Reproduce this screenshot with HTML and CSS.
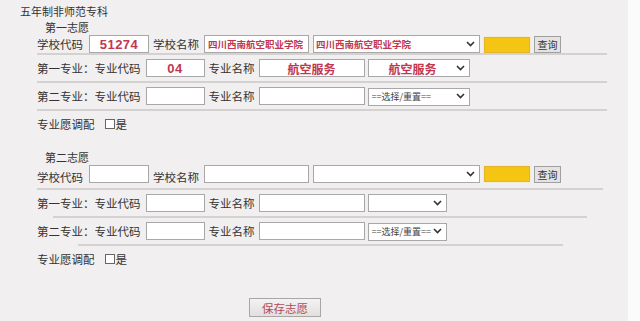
FILE: index.html
```html
<!DOCTYPE html>
<html lang="zh-CN">
<head>
  <meta charset="UTF-8" />
  <meta name="viewport" content="width=device-width, initial-scale=1.0"/>
  <title>志愿填报</title>
  <link rel="stylesheet" href="styles.css">
</head>
<body>
  <div class="page">
    <div class="panel">
      <div class="kind">五年制非师范专科</div>

      <!-- 第一志愿 -->
      <section class="choice">
        <div class="choice-title">第一志愿</div>
        <div class="row row-school">
          <span class="lbl">学校代码</span>
          <input class="txt code num" type="text" value="51274" />
          <span class="lbl">学校名称</span>
          <input class="txt name small" type="text" value="四川西南航空职业学院" />
          <div class="sel sel-school">
            <select class="small"><option>四川西南航空职业学院</option></select>
            <svg class="chev" width="9" height="6" viewBox="0 0 9 6"><path d="M1 1l3.5 3.5L8 1" fill="none" stroke="#333" stroke-width="1.6"/></svg>
          </div>
          <span class="mark"></span>
          <button class="query" type="button">查询</button>
        </div>
        <div class="rule"></div>
        <div class="row">
          <span class="lbl lbl-major">第一专业：专业代码</span>
          <input class="txt mcode num" type="text" value="04" />
          <span class="lbl">专业名称</span>
          <input class="txt mname big" type="text" value="航空服务" />
          <div class="sel sel-major">
            <select class="big"><option>航空服务</option></select>
            <svg class="chev" width="9" height="6" viewBox="0 0 9 6"><path d="M1 1l3.5 3.5L8 1" fill="none" stroke="#333" stroke-width="1.6"/></svg>
          </div>
        </div>
        <div class="rule"></div>
        <div class="row">
          <span class="lbl lbl-major">第二专业：专业代码</span>
          <input class="txt mcode" type="text" />
          <span class="lbl">专业名称</span>
          <input class="txt mname" type="text" />
          <div class="sel sel-major">
            <select class="pick"><option>==选择/重置==</option></select>
            <svg class="chev" width="9" height="6" viewBox="0 0 9 6"><path d="M1 1l3.5 3.5L8 1" fill="none" stroke="#333" stroke-width="1.6"/></svg>
          </div>
        </div>
        <div class="rule"></div>
        <div class="row row-adjust">
          <span class="lbl">专业愿调配</span>
          <input class="check" type="checkbox" />
          <span>是</span>
        </div>
      </section>

      <!-- 第二志愿 -->
      <section class="choice choice-second">
        <div class="choice-title">第二志愿</div>
        <div class="row row-school">
          <span class="lbl">学校代码</span>
          <input class="txt code" type="text" />
          <span class="lbl">学校名称</span>
          <input class="txt name" type="text" />
          <div class="sel sel-school">
            <select><option></option></select>
            <svg class="chev" width="9" height="6" viewBox="0 0 9 6"><path d="M1 1l3.5 3.5L8 1" fill="none" stroke="#333" stroke-width="1.6"/></svg>
          </div>
          <span class="mark"></span>
          <button class="query" type="button">查询</button>
        </div>
        <div class="rule rule-a"></div>
        <div class="row">
          <span class="lbl lbl-major">第一专业：专业代码</span>
          <input class="txt mcode" type="text" />
          <span class="lbl">专业名称</span>
          <input class="txt mname" type="text" />
          <div class="sel sel-short">
            <select><option></option></select>
            <svg class="chev" width="9" height="6" viewBox="0 0 9 6"><path d="M1 1l3.5 3.5L8 1" fill="none" stroke="#333" stroke-width="1.6"/></svg>
          </div>
        </div>
        <div class="rule rule-b"></div>
        <div class="row">
          <span class="lbl lbl-major">第二专业：专业代码</span>
          <input class="txt mcode" type="text" />
          <span class="lbl">专业名称</span>
          <input class="txt mname" type="text" />
          <div class="sel sel-short">
            <select class="pick"><option>==选择/重置==</option></select>
            <svg class="chev" width="9" height="6" viewBox="0 0 9 6"><path d="M1 1l3.5 3.5L8 1" fill="none" stroke="#333" stroke-width="1.6"/></svg>
          </div>
        </div>
        <div class="rule rule-c"></div>
        <div class="row row-adjust">
          <span class="lbl">专业愿调配</span>
          <input class="check" type="checkbox" />
          <span>是</span>
        </div>
      </section>

      <div class="actions">
        <button class="save" type="button">保存志愿</button>
      </div>
    </div>
  </div>
</body>
</html>
```

FILE: styles.css
```css
body {
  margin: 0;
  background: #fbfbfb;
  font-family: "Noto Sans CJK SC", "Noto Sans", sans-serif;
  font-size: 11.5px;
  color: #333;
}

.page {
  display: flex;
  height: 321px;
}

.panel {
  width: 628px;
  box-sizing: border-box;
  padding: 4px 0 0 20px;
  background: #f1efef;
}

.kind {
  font-size: 11px;
  line-height: 14px;
}

.choice-title {
  margin: 1px 0 0 25px;
  font-size: 11px;
  line-height: 16px;
}

.choice-second {
  margin-top: 13px;
}

.choice-second .choice-title {
  margin-top: 0;
  line-height: 15px;
}

.row {
  display: flex;
  align-items: center;
  height: 26px;
  margin-left: 17px;
  white-space: nowrap;
}

.row-school {
  height: 18px;
}

.choice-second .row-school {
  height: 23px;
  align-items: flex-start;
}

.choice-second .row-school .lbl {
  align-self: center;
}

.lbl {
  line-height: 14px;
}

.rule {
  height: 2px;
  width: 570px;
  margin-left: 17px;
  background: #d4d1d1;
}

.rule-a { width: 566px; }
.rule-b { margin-left: 33px; width: 534px; }
.rule-c { margin-left: 58px; width: 485px; }

/* text boxes */
.txt {
  box-sizing: border-box;
  height: 18px;
  padding: 0 3px;
  border: 1px solid #a8a8a8;
  background: #fff;
  font-family: inherit;
  color: #c2374f;
}

.code { width: 60px; margin: 0 4px 0 6px; }
.name { width: 105px; margin: 0 4px 0 5px; }
.mcode { width: 59px; margin: 0 4px 0 5px; }
.mname { width: 106px; margin: 0 3px 0 4px; }

.num {
  text-align: center;
  font-size: 13px;
  font-weight: bold;
  font-family: "Liberation Sans", sans-serif;
  letter-spacing: 0.5px;
}

.small {
  font-size: 9.5px;
  font-weight: bold;
  color: #c2374f;
}

.big {
  text-align: center;
  font-size: 12px;
  font-weight: bold;
  color: #c2374f;
}

/* select boxes */
.sel {
  position: relative;
  height: 18px;
  margin-right: 4px;
}

.sel select {
  -webkit-appearance: none;
  appearance: none;
  box-sizing: border-box;
  width: 100%;
  height: 18px;
  padding: 0 14px 0 2px;
  border: 1px solid #a8a8a8;
  border-radius: 0;
  background: #fff;
  font-family: inherit;
}

.sel select.big {
  text-align-last: center;
}

.sel select.pick {
  font-size: 9px;
  color: #444;
  padding-left: 3px;
}

.sel-school { width: 167px; }
.sel-major { width: 102px; }
.sel-short { width: 79px; }

.chev {
  position: absolute;
  right: 5px;
  top: 6px;
}

.mark {
  box-sizing: border-box;
  width: 46px;
  height: 16px;
  margin: 1px 4px 0 0;
  background: #f4c512;
  border: 1px solid #e2b52a;
  box-shadow: 0 0 1px #f7dc6a;
}

.query {
  box-sizing: border-box;
  width: 27px;
  height: 17px;
  margin-top: 1px;
  padding: 0;
  border: 1px solid #a0a0a0;
  background: #e3e3e3;
  font-family: inherit;
  font-size: 10px;
  color: #333;
}

.check {
  -webkit-appearance: none;
  appearance: none;
  box-sizing: border-box;
  width: 10px;
  height: 10px;
  margin: 0 1px 0 10px;
  border: 1px solid #666;
  background: #fff;
}

.actions {
  margin-top: 26px;
  padding-left: 229px;
}

.save {
  box-sizing: border-box;
  width: 72px;
  height: 19px;
  padding: 0;
  border: 1px solid #a9a6a6;
  background: linear-gradient(#f4f2f2, #e2dfdf);
  font-family: inherit;
  font-size: 11.5px;
  color: #b34a5a;
}
```
